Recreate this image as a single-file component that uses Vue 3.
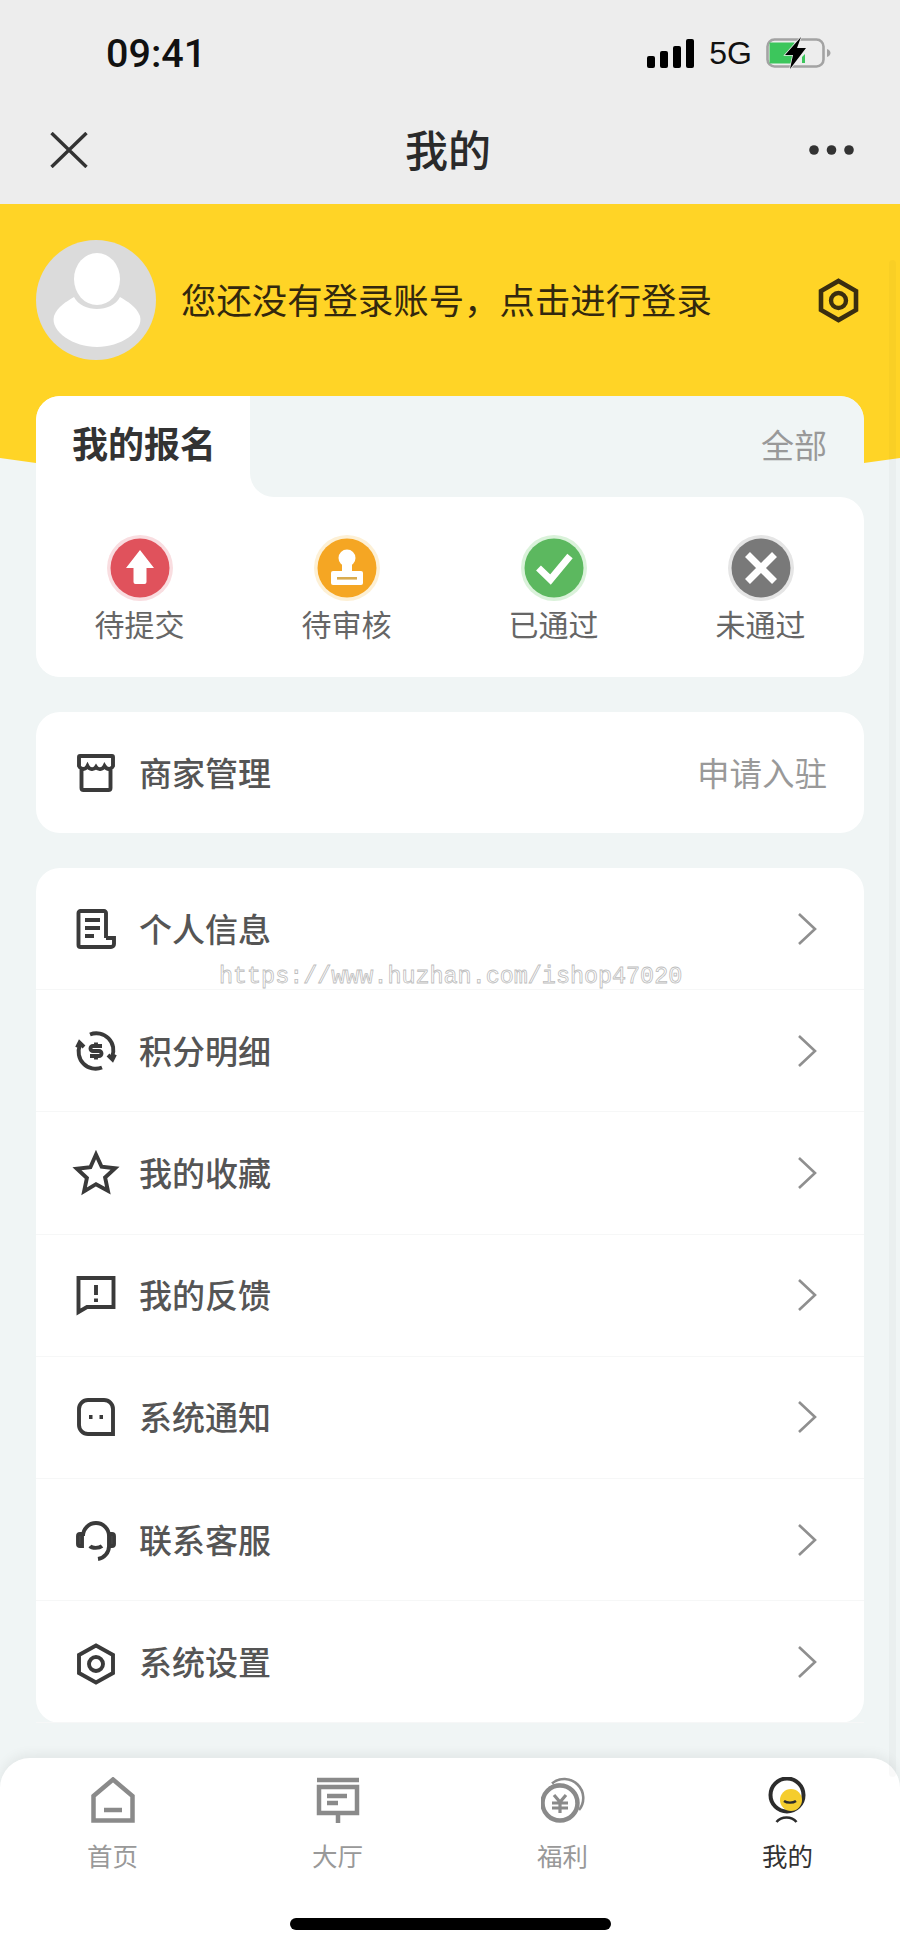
<template>
  <div class="page">
    <div class="top-bar">
      <div class="status">
        <span class="time">09:41</span>
        <div class="status-right">
          <div class="signal">
            <i class="b1"></i><i class="b2"></i><i class="b3"></i><i class="b4"></i>
          </div>
          <span class="net">5G</span>
          <svg class="battery" viewBox="0 0 66 33" width="66" height="33">
            <rect x="1.5" y="2.5" width="56" height="27" rx="7" fill="none" stroke="#a3a3a3" stroke-width="2.6" />
            <path d="M3.5 5.5h25v21h-25z" fill="#3cc65c" />
            <path d="M36 20l3-3v9h-3z" fill="#3cc65c" />
            <path d="M61 12c2.5 1 3.5 2.5 3.5 4s-1 3-3.5 4z" fill="#a3a3a3" />
            <path d="M35 0 19 18h8l-3 14 16-21h-9z" fill="#000" stroke="#ededed" stroke-width="1.5" paint-order="stroke" />
          </svg>
        </div>
      </div>
      <div class="nav">
        <svg class="close" viewBox="0 0 38 36" width="38" height="36">
          <path d="M1.5 1 36.5 35M36.5 1 1.5 35" stroke="#333" stroke-width="3.4" fill="none" />
        </svg>
        <span class="nav-title">我的</span>
        <svg class="more" viewBox="0 0 45 10" width="45" height="10">
          <circle cx="5" cy="5" r="4.8" fill="#333" /><circle cx="22.5" cy="5" r="4.8" fill="#333" /><circle cx="40" cy="5" r="4.8" fill="#333" />
        </svg>
      </div>
    </div>

    <div class="main">
      <div class="hero">
        <svg class="avatar" viewBox="0 0 120 120" width="120" height="120">
          <circle cx="60" cy="60" r="60" fill="#dbdbdb" />
          <ellipse cx="61" cy="39" rx="23" ry="26" fill="#fff" />
          <path d="M38 57C30 62 22 66 18 76 14 92 38 107 61 107S108 92 104 76C100 66 92 62 84 57 76 73 46 73 38 57z" fill="#fff" />
        </svg>
        <span class="login-text">您还没有登录账号，点击进行登录</span>
        <svg class="hero-gear" viewBox="0 0 41 45" width="41" height="45">
          <path d="M20.5 3 38 13v19L20.5 42 3 32V13z" fill="none" stroke="#3a2e10" stroke-width="4.6" />
          <circle cx="20.5" cy="22.5" r="7.5" fill="none" stroke="#3a2e10" stroke-width="4.4" />
        </svg>
      </div>

      <div class="content">
        <section class="signup">
          <div class="signup-head">
            <div class="signup-tab">我的报名</div>
            <div class="signup-rest"><span>全部</span></div>
          </div>
          <div class="signup-body">
            <div v-for="s in statuses" :key="s.label" class="status-item">
              <svg viewBox="0 0 66 66" width="66" height="66">
                <circle cx="33" cy="33" r="33" :fill="s.ring" />
                <circle cx="33" cy="33" r="29.5" :fill="s.color" />
                <template v-if="s.kind === 'up'">
                  <path d="M33 15 47 33H39.500v14a2 2 0 0 1-2 2h-9a2 2 0 0 1-2-2V33H19z" fill="#fff" />
                </template>
                <template v-else-if="s.kind === 'stamp'">
                  <circle cx="33" cy="23" r="8.5" fill="#fff" />
                  <rect x="28" y="27" width="10" height="11" fill="#fff" />
                  <rect x="17" y="36" width="32" height="14" rx="2" fill="#fff" />
                  <rect x="23" y="42" width="20" height="2.6" fill="#d9ab4e" />
                </template>
                <template v-else-if="s.kind === 'check'">
                  <path d="M17.500 33 29.500 44.500 49 21" fill="none" stroke="#fff" stroke-width="7" />
                </template>
                <template v-else>
                  <path d="M19.500 19.500 46.500 46.500M46.500 19.500 19.500 46.500" fill="none" stroke="#fff" stroke-width="7" />
                </template>
              </svg>
              <span>{{ s.label }}</span>
            </div>
          </div>
        </section>

        <section class="merchant">
          <svg class="row-icon" viewBox="0 0 40 40" width="40" height="40">
            <path v-for="d in storeIcon" :key="d" :d="d" />
          </svg>
          <span class="row-label">商家管理</span>
          <span class="merchant-link">申请入驻</span>
        </section>

        <section class="list">
          <div v-for="row in rows" :key="row.label" class="list-row">
            <svg class="row-icon" viewBox="0 0 40 40" width="40" height="40">
              <path v-for="d in row.paths" :key="d" :d="d" />
            </svg>
            <span class="row-label">{{ row.label }}</span>
            <svg class="chevron" viewBox="0 0 20 32" width="20" height="32">
              <path d="M2 1 18 16 2 31" fill="none" stroke="#8f8f8f" stroke-width="2.6" />
            </svg>
          </div>
          <div class="watermark">https://www.huzhan.com/ishop47020</div>
        </section>
      </div>
    </div>

    <div class="tabbar">
      <div class="tabs">
        <div class="tab">
          <svg viewBox="0 0 44 46" width="44" height="46">
            <path d="M2.500 19 22 2.500 41.500 19v24.500H2.500z" class="tab-line" />
            <path d="M13 33h18" class="tab-line" />
          </svg>
          <span>首页</span>
        </div>
        <div class="tab">
          <svg viewBox="0 0 44 46" width="44" height="46">
            <path d="M1 3h42M3 10h38v26H3zM22 37v9M11 19h20M11 26h11" class="tab-line" />
          </svg>
          <span>大厅</span>
        </div>
        <div class="tab">
          <svg viewBox="0 0 44 46" width="44" height="46">
            <circle cx="19" cy="26" r="17.500" class="tab-line" />
            <path d="M11 6.500A19 19 0 0 1 38 33" class="tab-line thin" />
            <path d="M8 11A18 18 0 0 1 36 26" class="tab-line thin" />
            <path d="M13 18l6 7 6-7M11 26h16M11 31h16M19 25v11" class="tab-line yen" />
          </svg>
          <span>福利</span>
        </div>
        <div class="tab active">
          <svg viewBox="0 0 44 46" width="44" height="46">
            <circle cx="21" cy="18" r="16.500" fill="#fff" stroke="#2c2c2c" stroke-width="4" />
            <circle cx="25" cy="23" r="11" fill="#f5cd2d" />
            <path d="M18 24c3 2.200 9 2.200 12 0" fill="none" stroke="#2c2c2c" stroke-width="2.400" />
            <path d="M10.500 45c5-6 15-6 20 0" fill="none" stroke="#2c2c2c" stroke-width="2.600" />
          </svg>
          <span>我的</span>
        </div>
      </div>
      <div class="home-bar"></div>
    </div>

    <div class="scroll-thumb"></div>
  </div>
</template>

<script setup>
const statuses = [
  { label: "待提交", kind: "up", color: "#e0525c", ring: "#f9dde0" },
  { label: "待审核", kind: "stamp", color: "#f5a623", ring: "#fdf0d5" },
  { label: "已通过", kind: "check", color: "#5cb85f", ring: "#daf2da" },
  { label: "未通过", kind: "cross", color: "#797979", ring: "#e5e5e5" },
];

const storeIcon = [
  "M4 3h32a1 1 0 0 1 1 1v9c-2 4-6 4-8.500 0-2 4-6.500 4-8.500 1-2 3-6.500 3-8.500-1-2 4-6.500 4-8.500 0V4a1 1 0 0 1 1-1z",
  "M5.500 17v18a2 2 0 0 0 2 2h25a2 2 0 0 0 2-2V17",
];

const rows = [
  {
    label: "个人信息",
    paths: [
      "M30 29V4a2 2 0 0 0-2-2H4.500a2 2 0 0 0-2 2v32a2 2 0 0 0 2 2H35a3 3 0 0 0 3-3v-6H30",
      "M9 11h15M9 19h15M9 27h9",
    ],
  },
  {
    label: "积分明细",
    paths: [
      "M14 3.500A17 17 0 0 1 36 26",
      "M26 36.500A17 17 0 0 1 4 14",
      "M32 24l4.500 4.500 2.500-5M8 16 3.500 11.500 1 16.500",
      "M26 15h-9a2.500 2.500 0 0 0 0 5h6a2.500 2.500 0 0 1 0 5h-9M20 11.500V15M20 25v3.500",
    ],
  },
  {
    label: "我的收藏",
    paths: ["M20 1.500l5.600 12.300 13.500 1.500-10 9.200 2.800 13.300L20 31.200 8.100 38.300l2.800-13.300-10-9.200 13.500-1.500z"],
  },
  {
    label: "我的反馈",
    paths: ["M2.500 3h35v29H11l-8.500 5z", "M20 10v10M20 23.500v3.500"],
  },
  {
    label: "系统通知",
    paths: ["M12 3h16a9 9 0 0 1 9 9v25H12a9 9 0 0 1-9-9V12a9 9 0 0 1 9-9z", "M13 20h3.500M23.500 20h3.500"],
  },
  {
    label: "联系客服",
    paths: [
      "M7 16a13 13 0 0 1 26 0v10a13 13 0 0 1-11 13",
      "M6 14H4a2 2 0 0 0-2 2v8a2 2 0 0 0 2 2h2zM34 14h2a2 2 0 0 1 2 2v8a2 2 0 0 1-2 2h-2z",
      "M14 26c2 2.500 9 2.500 12 0",
    ],
  },
  {
    label: "系统设置",
    paths: ["M20 3.500 37 13v18L20 40.500 3 31V13z", "M20 15a7 7 0 1 1 0 14 7 7 0 0 1 0-14z"],
  },
];
</script>

<style scoped>
.page {
  position: relative;
  width: 900px;
  height: 1949px;
  display: flex;
  flex-direction: column;
  overflow: hidden;
  background: #f0f5f5;
  font-family: "Liberation Sans", "Noto Sans CJK SC", sans-serif;
}
.top-bar { background: #ededed; height: 204px; flex-shrink: 0; }
.status {
  height: 100px;
  padding: 6px 68px 0 106px;
  box-sizing: border-box;
  display: flex;
  align-items: center;
  justify-content: space-between;
}
.time { font-family: Roboto, "Liberation Sans", sans-serif; font-size: 39.500px; font-weight: 500; color: #111; }
.status-right { display: flex; align-items: center; }
.signal { display: flex; align-items: flex-end; gap: 5px; height: 29px; }
.signal i { width: 8px; background: #000; border-radius: 2px; display: block; }
.b1 { height: 12px; }
.b2 { height: 17px; }
.b3 { height: 22px; }
.b4 { height: 29px; }
.net { font-size: 32px; color: #111; margin: 0 14px 0 15px; }
.battery { margin-top: 1px; }
.nav {
  height: 104px;
  padding: 0 46px 4px 50px;
  box-sizing: border-box;
  display: grid;
  grid-template-columns: 1fr auto 1fr;
  align-items: center;
}
.nav-title { font-size: 43px; font-weight: 500; color: #2a2a2a; position: relative; left: -4px; top: -2px; }
.more { justify-self: end; }

.main { flex: 1; }
.hero {
  height: 262px;
  padding: 36px 41px 0 36px;
  box-sizing: border-box;
  background: #ffd426;
  display: flex;
  align-items: flex-start;
  clip-path: polygon(0 0, 100% 0, 100% 254px, 864px 259px, 36px 259px, 0 254px);
}
.login-text {
  flex: 1;
  margin: 39px 0 0 25px;
  font-size: 35.400px;
  line-height: 46px;
  color: #33280e;
}
.hero-gear { margin-top: 38px; }

.content { margin-top: -70px; padding: 0 36px; display: flex; flex-direction: column; gap: 35px; }
.signup {
  border-radius: 24px;
  overflow: hidden;
  background: linear-gradient(90deg, #fff 50%, #f0f5f5 50%);
  position: relative;
}
.signup-head { display: flex; height: 101px; }
.signup-tab {
  width: 214px;
  padding: 25px 0 0 36px;
  box-sizing: border-box;
  background: #fff;
  border-radius: 24px 24px 0 0;
  font-size: 36px;
  line-height: 50px;
  font-weight: 700;
  color: #333;
}
.signup-rest {
  flex: 1;
  background: #f0f5f5;
  border-radius: 0 24px 0 24px;
  padding: 26px 37px 0 0;
  text-align: right;
  font-size: 33px;
  line-height: 50px;
  color: #999;
}
.signup-body {
  background: #fff;
  border-radius: 0 24px 24px 24px;
  height: 180px;
  padding-top: 38px;
  box-sizing: border-box;
  display: grid;
  grid-template-columns: repeat(4, 1fr);
}
.status-item { display: flex; flex-direction: column; align-items: center; }
.status-item span { margin-top: 8px; font-size: 30px; line-height: 34px; color: #666; }

.merchant {
  height: 121px;
  background: #fff;
  border-radius: 24px;
  padding: 0 37px 0 40px;
  display: flex;
  align-items: center;
}
.row-icon {
  flex-shrink: 0;
  overflow: visible;
  fill: none;
  stroke: #3a3a3a;
  stroke-width: 3.900;
}
.row-label { margin: 0 0 2px 23px; font-size: 33px; font-weight: 500; color: #555; }
.merchant-link { margin: 0 0 3px auto; font-size: 32.500px; color: #999; }

.list { position: relative; background: #fff; border-radius: 24px; }
.list-row {
  height: 122.200px;
  box-sizing: border-box;
  padding: 0 47px 0 40px;
  display: flex;
  align-items: center;
  border-bottom: 1px solid #f6f7f7;
}
.list-row:last-of-type { border-bottom: none; }
.chevron { margin-left: auto; }
.watermark {
  position: absolute;
  left: 183px;
  top: 94px;
  font-family: "Liberation Mono", monospace;
  font-size: 23.400px;
  line-height: 30px;
  color: #fff;
  -webkit-text-stroke: 0.8px #bdbdbd;
  white-space: nowrap;
}

.tabbar {
  position: relative;
  height: 191px;
  flex-shrink: 0;
  background: #fff;
  border-radius: 30px 30px 0 0;
  box-shadow: 0 -4px 12px rgba(0, 0, 0, 0.06);
  display: flex;
  flex-direction: column;
}
.tabs { display: grid; grid-template-columns: repeat(4, 1fr); padding-top: 19px; }
.tab { display: flex; flex-direction: column; align-items: center; }
.tab span { margin-top: 19px; font-size: 25.500px; line-height: 30px; color: #999; }
.tab.active span { color: #333; }
.tab-line { fill: none; stroke: #8a8a8a; stroke-width: 4.500; }
.tab-line.thin { stroke-width: 2.600; }
.tab-line.yen { stroke-width: 3.200; }
.home-bar {
  width: 321px;
  height: 12px;
  margin: auto auto 19px;
  background: #000;
  border-radius: 6px;
}
.scroll-thumb {
  position: absolute;
  left: 889px;
  top: 260px;
  width: 7px;
  height: 1517px;
  background: rgba(0, 0, 0, 0.025);
  border-radius: 4px;
}
</style>
